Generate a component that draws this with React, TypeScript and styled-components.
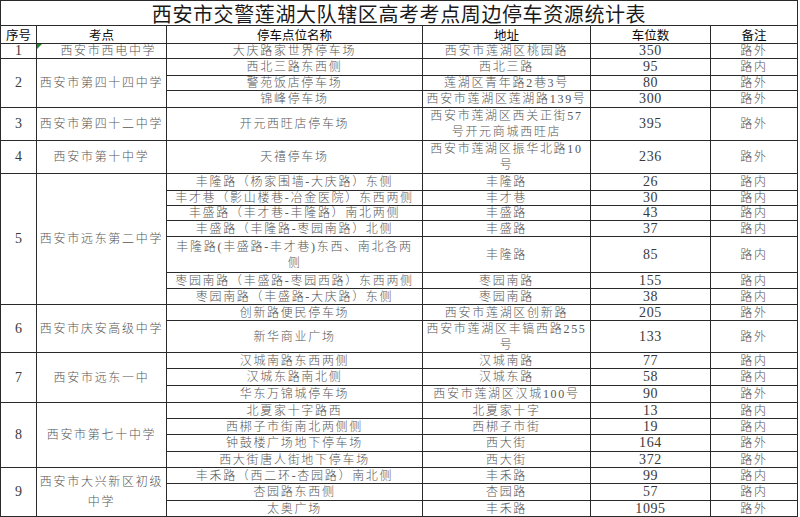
import React from "react";
import styled, { createGlobalStyle } from "styled-components";

const Global = createGlobalStyle`
  html, body { margin: 0; padding: 0; background: #ffffff; }
  body { font-family: "Noto Sans CJK SC", "Noto Sans", sans-serif; }
`;

const LINE = "#2a2a2a";

const Sheet = styled.div`
  display: grid;
  grid-template-columns: 36px 130px 256px 168px 120px 87px;
  grid-template-rows: 25px 18px 15px 17px 15px 17px 33px 33px 17px 15px 15px 16px 36px 16px 16px 16px 32px 16px 17px 17px 16px 16px 17px 16px 16px 17px 16px;
  width: max-content;
  border-top: 1px solid ${LINE};
  border-left: 1px solid ${LINE};
  background: #fff;
`;

const BaseCell = styled.div`
  box-sizing: border-box;
  border-right: 1px solid ${LINE};
  border-bottom: 1px solid ${LINE};
  display: flex;
  align-items: center;
  justify-content: center;
  text-align: center;
  overflow: visible;
  min-width: 0;
`;

const TitleCell = styled(BaseCell)`
  grid-column: 1 / -1;
  font-family: "Noto Sans CJK SC", sans-serif;
  font-size: 20px;
  letter-spacing: 0.6px;
  font-weight: 400;
  color: #1a1a1a;
  line-height: 20px;
  padding-top: 2px;
  white-space: nowrap;
`;

const HeadCell = styled(BaseCell)`
  font-family: "Noto Sans CJK SC", sans-serif;
  font-size: 12.5px;
  font-weight: 400;
  color: #0a0a0a;
  line-height: 15px;
  white-space: nowrap;
`;

type Kind = "text" | "num" | "idx" | "school";

const Cell = styled(BaseCell)<{ $rows?: number; $kind: Kind }>`
  grid-row: span ${(p) => p.$rows ?? 1};
  position: relative;
  white-space: pre;
  font-family: "Liberation Serif", "Noto Sans CJK SC", serif;
  font-size: ${(p) => (p.$kind === "num" || p.$kind === "idx" ? "14px" : "12px")};
  letter-spacing: ${(p) => (p.$kind === "num" ? "0.6px" : p.$kind === "idx" ? "0" : "1.7px")};
  line-height: ${(p) => (p.$kind === "school" ? "20px" : "16px")};
  color: ${(p) => (p.$kind === "num" || p.$kind === "idx" ? "#3a3a3a" : "#575757")};
  font-weight: ${(p) => (p.$kind === "num" || p.$kind === "idx" ? 400 : 300)};
`;

const Marker = styled.span`
  position: absolute;
  left: 0;
  top: 0;
  width: 0;
  height: 0;
  border-top: 5px solid #1e8a2e;
  border-right: 5px solid transparent;
`;

type Row = [string, string, string, string];
type Group = { no: string; school: string; rows: Row[]; mark?: boolean };

const groups: Group[] = [
  { no: "1", school: "　西安市西电中学", mark: true, rows: [["大庆路家世界停车场", "西安市莲湖区桃园路", "350", "路外"]] },
  {
    no: "2",
    school: "西安市第四十四中学",
    rows: [
      ["西北三路东西侧", "西北三路", "95", "路内"],
      ["警苑饭店停车场", "莲湖区青年路2巷3号", "80", "路外"],
      ["锦峰停车场", "西安市莲湖区莲湖路139号", "300", "路外"],
    ],
  },
  { no: "3", school: "西安市第四十二中学", rows: [["开元西旺店停车场", "西安市莲湖区西关正街57\n号开元商城西旺店", "395", "路外"]] },
  { no: "4", school: "西安市第十中学", rows: [["天禧停车场", "西安市莲湖区振华北路10\n号", "236", "路外"]] },
  {
    no: "5",
    school: "西安市远东第二中学",
    rows: [
      ["丰隆路（杨家围墙-大庆路）东侧", "丰隆路", "26", "路内"],
      ["丰才巷（影山楼巷-冶金医院）东西两侧", "丰才巷", "30", "路内"],
      ["丰盛路（丰才巷-丰隆路）南北两侧", "丰盛路", "43", "路内"],
      ["丰盛路（丰隆路-枣园南路）北侧", "丰盛路", "37", "路内"],
      ["丰隆路(丰盛路-丰才巷)东西、南北各两\n侧", "丰隆路", "85", "路内"],
      ["枣园南路（丰盛路-枣园西路）东西两侧", "枣园南路", "155", "路内"],
      ["枣园南路（丰盛路-大庆路）东侧", "枣园南路", "38", "路内"],
    ],
  },
  {
    no: "6",
    school: "西安市庆安高级中学",
    rows: [
      ["创新路便民停车场", "西安市莲湖区创新路", "205", "路外"],
      ["新华商业广场", "西安市莲湖区丰镐西路255\n号", "133", "路外"],
    ],
  },
  {
    no: "7",
    school: "西安市远东一中",
    rows: [
      ["汉城南路东西两侧", "汉城南路", "77", "路内"],
      ["汉城东路南北侧", "汉城东路", "58", "路内"],
      ["华东万锦城停车场", "西安市莲湖区汉城100号", "90", "路外"],
    ],
  },
  {
    no: "8",
    school: "西安市第七十中学",
    rows: [
      ["北夏家十字路西", "北夏家十字", "13", "路内"],
      ["西梆子市街南北两侧侧", "西梆子市街", "19", "路内"],
      ["钟鼓楼广场地下停车场", "西大街", "164", "路外"],
      ["西大街唐人街地下停车场", "西大街", "372", "路外"],
    ],
  },
  {
    no: "9",
    school: "西安市大兴新区初级\n中学",
    rows: [
      ["丰禾路（西二环-杏园路）南北侧", "丰禾路", "99", "路内"],
      ["杏园路东西侧", "杏园路", "57", "路内"],
      ["太奥广场", "丰禾路", "1095", "路外"],
    ],
  },
];

const headers = ["序号", "考点", "停车点位名称", "地址", "车位数", "备注"];

export default function App() {
  return (
    <>
      <Global />
      <Sheet>
        <TitleCell>西安市交警莲湖大队辖区高考考点周边停车资源统计表</TitleCell>
        {headers.map((h) => (
          <HeadCell key={h}>{h}</HeadCell>
        ))}
        {groups.map((g) => (
          <React.Fragment key={g.no}>
            <Cell $kind="idx" $rows={g.rows.length}>{g.no}</Cell>
            <Cell $kind="school" $rows={g.rows.length}>
              {g.mark && <Marker />}
              {g.school}
            </Cell>
            {g.rows.map((r, i) => (
              <React.Fragment key={i}>
                <Cell $kind="text">{r[0]}</Cell>
                <Cell $kind="text">{r[1]}</Cell>
                <Cell $kind="num">{r[2]}</Cell>
                <Cell $kind="text">{r[3]}</Cell>
              </React.Fragment>
            ))}
          </React.Fragment>
        ))}
      </Sheet>
    </>
  );
}
